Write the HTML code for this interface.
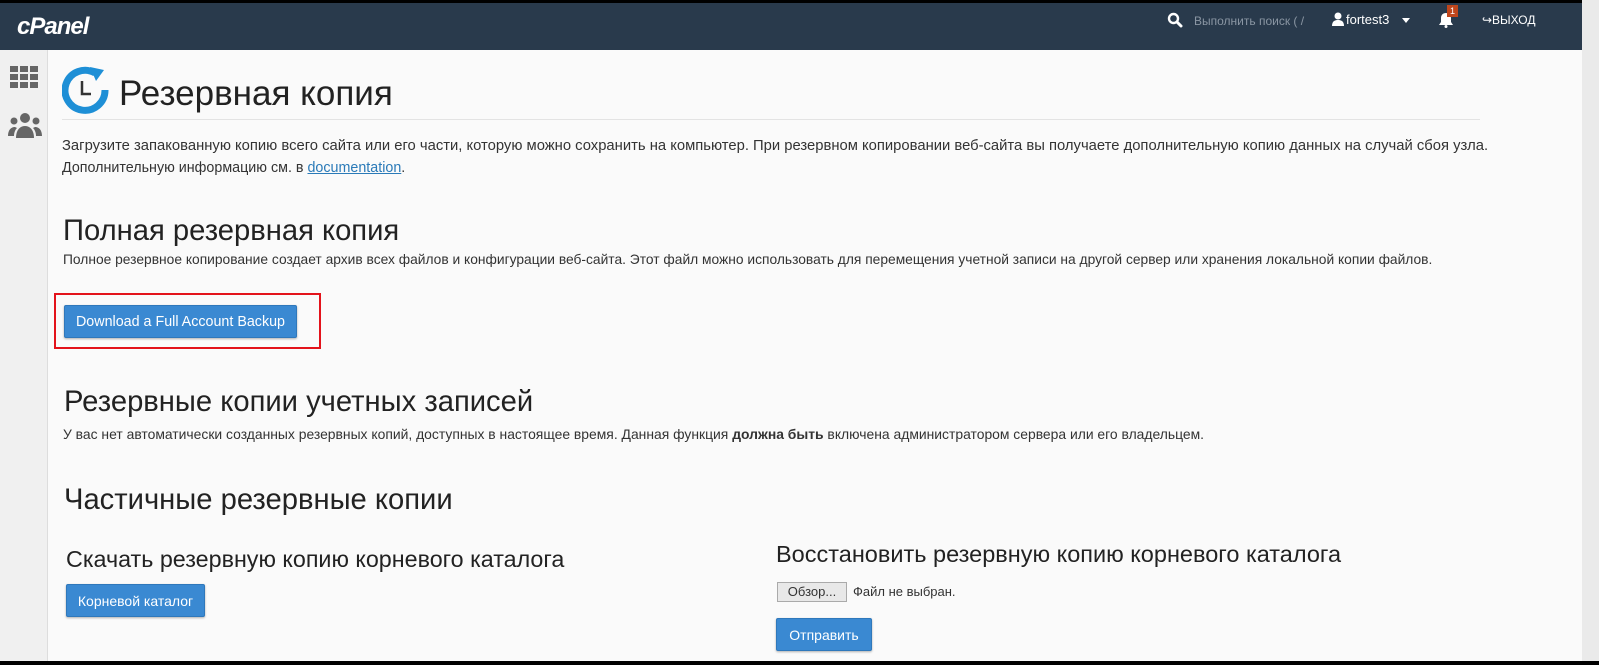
<!DOCTYPE html>
<html><head><meta charset="utf-8"><style>
*{margin:0;padding:0;box-sizing:border-box}
body{width:1599px;height:665px;overflow:hidden;background:#fafafa;font-family:"Liberation Sans","Noto Sans CJK SC",sans-serif;color:#333;position:relative}
.top{position:absolute;left:0;top:0;width:1582px;height:50px;background:#293a4c;border-top:3px solid #000}
.side{position:absolute;left:0;top:50px;width:48px;height:615px;background:#f0f0f0;border-right:1px solid #ddd}
.scroll{position:absolute;right:0;top:0;width:17px;height:665px;background:#eaeaea}
.a{position:absolute;white-space:nowrap}
.btn{position:absolute;background:#3a89d2;color:#fff;border:1px solid #2f78bb;border-radius:2px;font-size:14px;display:flex;align-items:center;justify-content:center;box-shadow:0 1px 2px rgba(0,0,0,.3)}
h1,h2{font-weight:normal}
</style></head><body>
<div class="top">
 <div class="a" style="left:17px;top:10px;color:#fff;font-size:24px;font-weight:bold;font-style:italic;letter-spacing:-1px">cPanel</div>
 <svg class="a" style="left:1167px;top:9px" width="16" height="16" viewBox="0 0 16 16"><circle cx="6.5" cy="6.5" r="4.5" fill="none" stroke="#fff" stroke-width="2.4"/><path d="M10 10l4 4" stroke="#fff" stroke-width="3" stroke-linecap="round"/></svg>
 <div class="a" style="left:1194px;top:11px;color:#8a96a3;font-size:12px">Выполнить поиск ( /</div>
 <svg class="a" style="left:1332px;top:9px" width="12" height="14" viewBox="0 0 12 14"><circle cx="6" cy="4" r="3.5" fill="#fff"/><path d="M0 14c0-5 3-6 6-6s6 1 6 6z" fill="#fff"/></svg>
 <div class="a" style="left:1346px;top:9px;color:#fff;font-size:13px">fortest3</div>
 <div class="a" style="left:1402px;top:15px;border:4px solid transparent;border-top:5px solid #fff"></div>
 <svg class="a" style="left:1438px;top:9px" width="16" height="16" viewBox="0 0 16 16"><path d="M8 1c3 0 5 2 5 5v4l2 3H1l2-3V6c0-3 2-5 5-5z" fill="#fff"/><circle cx="8" cy="14.5" r="1.5" fill="#fff"/></svg>
 <div class="a" style="left:1447px;top:2px;background:#c0461c;color:#fff;font-size:9px;padding:1px 3px">1</div>
 <div class="a" style="left:1482px;top:10px;color:#fff;font-size:12px">&#x21aa;ВЫХОД</div>
</div>
<div class="side">
 <svg class="a" style="left:10px;top:16px" width="28" height="22" viewBox="0 0 28 22"><g fill="#666"><rect x="0" y="0" width="8" height="6"/><rect x="10" y="0" width="8" height="6"/><rect x="20" y="0" width="8" height="6"/><rect x="0" y="8" width="8" height="6"/><rect x="10" y="8" width="8" height="6"/><rect x="20" y="8" width="8" height="6"/><rect x="0" y="16" width="8" height="6"/><rect x="10" y="16" width="8" height="6"/><rect x="20" y="16" width="8" height="6"/></g></svg>
 <svg class="a" style="left:8px;top:62px" width="34" height="26" viewBox="0 0 34 26"><g fill="#666"><circle cx="17" cy="6" r="5"/><circle cx="6" cy="9" r="3.5"/><circle cx="28" cy="9" r="3.5"/><path d="M8 26c0-8 4-12 9-12s9 4 9 12z"/><path d="M0 24c0-6 3-9 7-9l2 1c-2 2-3 5-3 8z"/><path d="M34 24c0-6-3-9-7-9l-2 1c2 2 3 5 3 8z"/></g></svg>
</div>
<div class="scroll"></div>
<svg class="a" style="left:62px;top:66px" width="48" height="48" viewBox="0 0 48 48"><path d="M33 7A20 20 0 1 0 43 24" fill="none" stroke="#1e8fd6" stroke-width="7"/><path d="M28 1l14 3-8 11z" fill="#1e8fd6"/><path d="M20 15v13h9" fill="none" stroke="#333" stroke-width="2.5"/></svg>
<h1 class="a" style="left:119px;top:74px;font-size:35px;color:#222">Резервная копия</h1>
<div class="a" style="left:62px;top:119px;width:1418px;height:1px;background:#e3e3e3"></div>
<div class="a" style="left:62px;top:135px;font-size:14.8px;line-height:22px">Загрузите запакованную копию всего сайта или его части, которую можно сохранить на компьютер. При резервном копировании веб-сайта вы получаете дополнительную копию данных на случай сбоя узла.</div>
<div class="a" style="left:62px;top:157px;font-size:14.3px;line-height:22px">Дополнительную информацию см. в <span style="color:#2a7ab8;text-decoration:underline">documentation</span>.</div>
<h2 class="a" style="left:63px;top:215px;font-size:29.2px;color:#222">Полная резервная копия</h2>
<div class="a" style="left:63px;top:252px;font-size:13.8px">Полное резервное копирование создает архив всех файлов и конфигурации веб-сайта. Этот файл можно использовать для перемещения учетной записи на другой сервер или хранения локальной копии файлов.</div>
<div class="a" style="left:54px;top:293px;width:267px;height:56px;border:2px solid #e3131b"></div>
<div class="btn" style="left:64px;top:305px;width:233px;height:33px;font-size:14.3px">Download a Full Account Backup</div>
<h2 class="a" style="left:64px;top:386px;font-size:29.2px;color:#222">Резервные копии учетных записей</h2>
<div class="a" style="left:63px;top:426px;font-size:13.9px">У вас нет автоматически созданных резервных копий, доступных в настоящее время. Данная функция <b>должна быть</b> включена администратором сервера или его владельцем.</div>
<h2 class="a" style="left:64px;top:484px;font-size:29.2px;color:#222">Частичные резервные копии</h2>
<div class="a" style="left:66px;top:546px;font-size:23.3px;color:#222">Скачать резервную копию корневого каталога</div>
<div class="btn" style="left:66px;top:584px;width:139px;height:33px">Корневой каталог</div>
<div class="a" style="left:776px;top:541px;font-size:23.5px;color:#222">Восстановить резервную копию корневого каталога</div>
<div class="a" style="left:777px;top:582px;width:70px;height:20px;background:#e8e8e8;border:1px solid #aaa;font-size:13px;text-align:center;line-height:18px">Обзор...</div>
<div class="a" style="left:853px;top:584px;font-size:13px">Файл не выбран.</div>
<div class="btn" style="left:776px;top:618px;width:96px;height:33px">Отправить</div>
<div class="a" style="left:0;top:661px;width:1599px;height:4px;background:#000"></div>
</body></html>
